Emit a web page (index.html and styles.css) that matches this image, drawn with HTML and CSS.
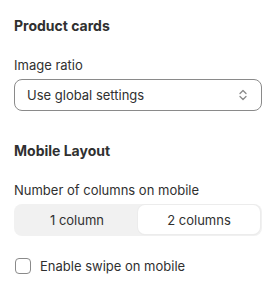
FILE: index.html
```html
<!DOCTYPE html>
<html>
<head>
<meta charset="utf-8">
<link rel="stylesheet" href="styles.css">
</head>
<body>
<div class="panel">
  <section class="group">
    <h2 class="heading">Product cards</h2>
    <div class="field">
      <label class="label">Image ratio</label>
      <div class="select">
        <span>Use global settings</span>
        <svg class="chev" width="12" height="16" viewBox="0 0 12 16"><path d="M3 6.5 L6 3.5 L9 6.5 M3 9.5 L6 12.5 L9 9.5" fill="none" stroke="#8a8a8a" stroke-width="1.3" stroke-linecap="round" stroke-linejoin="round"/></svg>
      </div>
    </div>
  </section>
  <section class="group">
    <h2 class="heading">Mobile Layout</h2>
    <div class="field">
      <label class="label">Number of columns on mobile</label>
      <div class="segmented">
        <div class="seg">1 column</div>
        <div class="seg active">2 columns</div>
      </div>
    </div>
    <label class="check">
      <span class="box"></span>
      <span>Enable swipe on mobile</span>
    </label>
  </section>
</div>
</body>
</html>
```
FILE: styles.css
```css
* { box-sizing: border-box; }
body {
  margin: 0;
  background: #ffffff;
  font-family: Inter, "Noto Sans", sans-serif;
  font-size: 13px;
  line-height: 20px;
  color: #303030;
}
.panel {
  padding: 16px 14px 0 14px;
  display: flex;
  flex-direction: column;
  gap: 30px;
}
.group {
  display: flex;
  flex-direction: column;
  gap: 19px;
}
.heading {
  margin: 0;
  font-size: 14px;
  font-weight: 650;
  line-height: 20px;
  color: #303030;
}
.field {
  display: flex;
  flex-direction: column;
  gap: 4px;
}
.label { font-weight: 400; }
.select {
  height: 32px;
  border: 1px solid #8a8a8a;
  border-radius: 8px;
  display: flex;
  align-items: center;
  justify-content: space-between;
  padding: 0 12px 0 12px;
}
.chev { display: block; }
.segmented {
  height: 32px;
  background: #f1f1f1;
  border-radius: 8px;
  display: grid;
  grid-template-columns: 1fr 1fr;
  padding: 1px 2px 2px 2px;
}
.seg {
  display: flex;
  align-items: center;
  justify-content: center;
  border-radius: 7px;
}
.seg.active {
  background: #ffffff;
  box-shadow: 0 0 0 1px #ececec, 0 1px 1px rgba(0,0,0,0.05);
}
.check {
  display: flex;
  align-items: center;
  gap: 9px;
  margin-top: 1px;
  padding-left: 1px;
}
.box {
  width: 16px;
  height: 16px;
  border: 1px solid #8a8a8a;
  border-radius: 4px;
  background: #fff;
}
```
